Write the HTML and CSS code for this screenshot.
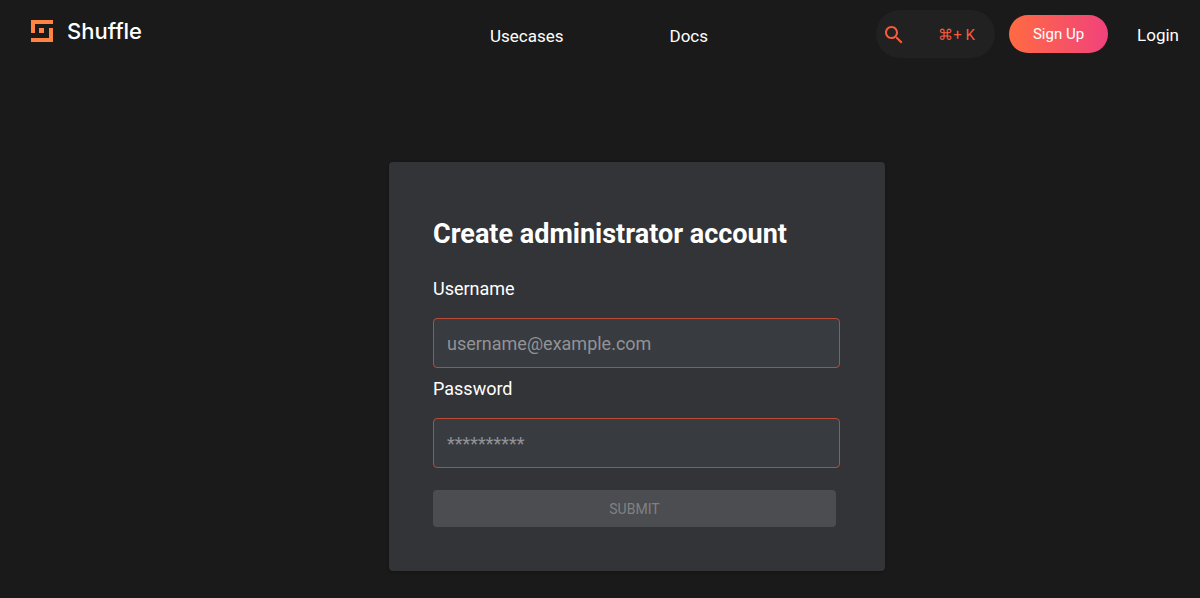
FILE: index.html
```
<!DOCTYPE html>
<html lang="en">
<head>
    <meta charset="utf-8">
    <title>Shuffle - Create administrator account</title>
    <link rel="stylesheet" href="styles.css">
</head>
<body>
    <header class="navbar">
        <a class="brand" href="/">
            <svg class="logo" viewBox="0 0 22 22" aria-hidden="true">
                <path fill="#ff8444" d="M0 0h22v4H4v9H0zM22 22H0v-4h18V8h4zM8 8h5v5H8z"/>
            </svg>
            <span>Shuffle</span>
        </a>
        <nav class="links">
            <a href="/usecases">Usecases</a>
            <a href="/docs">Docs</a>
        </nav>
        <div class="actions">
            <button class="search" type="button" aria-label="Search">
                <svg class="search-icon" viewBox="0 0 24 24" aria-hidden="true">
                    <path fill="currentColor" d="M15.5 14h-.79l-.28-.27C15.41 12.59 16 11.11 16 9.5 16 5.91 13.09 3 9.5 3S3 5.91 3 9.5 5.91 16 9.5 16c1.61 0 3.09-.59 4.23-1.57l.27.28v.79l5 4.99L20.49 19l-4.99-5zm-6 0C7.01 14 5 11.99 5 9.5S7.01 5 9.5 5 14 7.01 14 9.5 11.99 14 9.5 14z"/>
                </svg>
                <span>⌘+ K</span>
            </button>
            <a class="signup" href="/register">Sign Up</a>
            <a class="login" href="/login">Login</a>
        </div>
    </header>

    <main class="page">
        <form class="card">
            <h1>Create administrator account</h1>
            <label for="username">Username</label>
            <input type="text" id="username" placeholder="username@example.com">
            <label for="password">Password</label>
            <input type="password" id="password" placeholder="**********">
            <button class="submit" type="submit" disabled>SUBMIT</button>
        </form>
    </main>
</body>
</html>
```

FILE: styles.css
```
* {
    box-sizing: border-box;
}
body {
    margin: 0;
    background-color: #1a1a1a;
    color: white;
    font-family: Roboto, "Liberation Sans", sans-serif;
    font-size: 16px;
}
a {
    color: inherit;
    text-decoration: none;
}
.navbar {
    display: grid;
    grid-template-columns: 1fr auto 1fr;
    align-items: center;
    height: 68px;
    padding: 0 21px 0 31px;
}
.brand {
    display: flex;
    align-items: center;
    gap: 14px;
    padding-bottom: 7px;
    font-family: Inter, "Liberation Sans", sans-serif;
    font-size: 22px;
    font-weight: 500;
}
.logo {
    width: 22px;
    height: 22px;
}
.links {
    display: flex;
    gap: 106px;
    padding: 4px 12px 0 0;
    font-size: 17px;
}
.actions {
    display: flex;
    align-items: center;
    justify-content: flex-end;
}
.search {
    display: flex;
    align-items: center;
    justify-content: space-between;
    width: 119px;
    height: 48px;
    margin-right: 14px;
    padding: 2px 20px 0 6px;
    border: none;
    border-radius: 24px;
    background-color: #212121;
    color: #f85a3e;
    font-family: inherit;
    font-size: 15px;
}
.search-icon {
    width: 24px;
    height: 24px;
}
.signup {
    margin-right: 29px;
    padding: 10px 24px;
    border-radius: 20px;
    background: linear-gradient(90deg, #ff6b42, #f1427c);
    font-size: 15px;
    line-height: 18px;
}
.login {
    padding-top: 2px;
    font-size: 17px;
}
.page {
    display: flex;
    justify-content: center;
    padding: 94px 0 26px 74px;
}
.card {
    width: 100%;
    max-width: 496px;
    padding: 52px 45px 44px 44px;
    border-radius: 4px;
    background-color: #333438;
    box-shadow: 0 1px 3px rgba(0, 0, 0, 0.3);
}
.card h1 {
    margin: 0 0 24px;
    font-size: 27px;
    line-height: 40px;
}
.card label {
    display: block;
    margin-bottom: 18px;
    font-size: 18px;
    line-height: 22px;
}
.card input {
    display: block;
    width: 100%;
    height: 50px;
    margin-bottom: 10px;
    padding: 0 13px;
    border: 1px solid #b84c37;
    border-radius: 4px;
    background-color: #383b40;
    color: white;
    font-family: inherit;
    font-size: 18px;
}
.card input::placeholder {
    color: #929396;
}
.submit {
    display: block;
    width: 99%;
    height: 37px;
    margin-top: 22px;
    border: none;
    border-radius: 4px;
    background-color: #4c4d50;
    color: #808183;
    font-family: inherit;
    font-size: 14px;
}
```
